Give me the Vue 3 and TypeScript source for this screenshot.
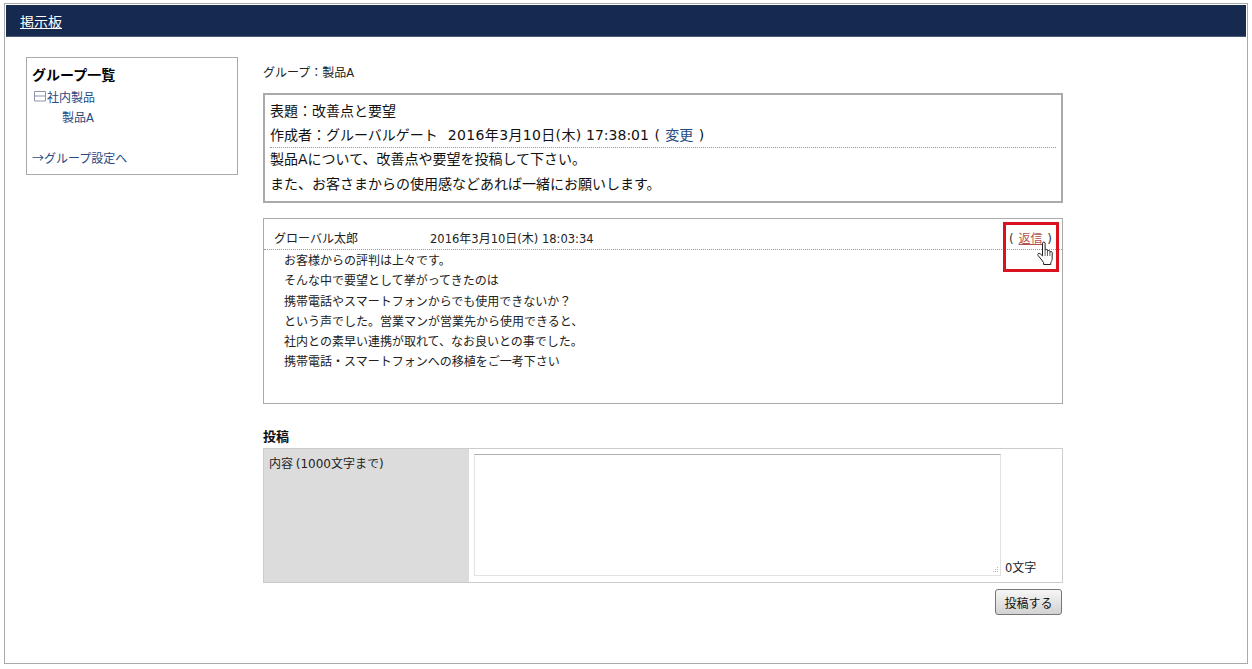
<script setup lang="ts">
const lines: string[] = [
  'お客様からの評判は上々です。',
  'そんな中で要望として挙がってきたのは',
  '携帯電話やスマートフォンからでも使用できないか？',
  'という声でした。営業マンが営業先から使用できると、',
  '社内との素早い連携が取れて、なお良いとの事でした。',
  '携帯電話・スマートフォンへの移植をご一考下さい',
]
</script>

<template>
  <div class="frame">
    <header class="bar"><a class="bar-title">掲示板</a></header>
    <div class="columns">
      <aside class="side">
        <h2 class="side-title">グループ一覧</h2>
        <div class="tree-row">
          <svg class="minus" width="14" height="12" viewBox="0 0 14 12">
            <path d="M1.500 1.500h11v9.500h-11zM1.500 6h11" fill="none" stroke="#8a96a8" stroke-width="1" />
          </svg>
          <a class="link">社内製品</a>
        </div>
        <div class="tree-child"><a class="link">製品<span class="lat">A</span></a></div>
        <a class="link settings">→グループ設定へ</a>
      </aside>
      <main class="main">
        <div class="group">グループ：製品<span class="lat">A</span></div>
        <section class="topic">
          <div class="topic-line">表題：改善点と要望</div>
          <div class="topic-line topic-author">作成者：グルーバルゲート&nbsp;&nbsp;<span class="topic-date">2016年3月10日(木)</span> 17:38:01 <span class="topic-paren">(</span> <a class="link">変更</a> <span class="topic-paren">)</span></div>
          <div class="topic-line topic-body-first">製品Aについて、改善点や要望を投稿して下さい。</div>
          <div class="topic-line">また、お客さまからの使用感などあれば一緒にお願いします。</div>
        </section>
        <section class="post">
          <div class="post-head">
            <span class="post-name">グローバル太郎</span>
            <span class="post-date"><span class="lat">2016</span>年<span class="lat">3</span>月<span class="lat">10</span>日<span class="lat">(</span>木<span class="lat">) 18:03:34</span></span>
            <span class="reply"><span class="reply-paren">( </span><a class="reply-link">返信</a><span class="reply-paren"> )</span></span>
            <div class="highlight"></div>
            <svg class="cursor" width="20" height="26" viewBox="0 0 20 26">
              <path d="M6.500 2.200c0-1.600 2.600-1.600 2.600 0v7.200c0-1.300 2.400-1.300 2.400 0v1c0-1.300 2.400-1.300 2.400 0v1c0-1.200 2.300-1.200 2.300.2v5.600c0 2-.7 3-1.400 4.300v2H7.600v-2C6 19 3.900 17 2.200 14.600c-1.200-1.800.7-3 2.100-1.800l2.200 2.100z" fill="#fff" stroke="#222" stroke-width="1" stroke-linejoin="round" />
              <path d="M9.100 10v5M11.500 10.400v4.600M13.900 11.400v3.600" fill="none" stroke="#444" stroke-width="0.800" />
            </svg>
          </div>
          <div class="post-body">
            <div v-for="line in lines" :key="line" class="post-line">{{ line }}</div>
          </div>
        </section>
        <h3 class="form-title">投稿</h3>
        <div class="form">
          <div class="form-label">内容 <span class="lat lat-wide">(1000</span>文字まで<span class="lat lat-wide">)</span></div>
          <div class="form-field">
            <div class="input-wrap">
              <textarea class="input"></textarea>
              <svg class="grip" width="8" height="8" viewBox="0 0 8 8">
                <path d="M6 1h1v1H6zM4 3h1v1H4zM6 3h1v1H6zM2 5h1v1H2zM4 5h1v1H4zM6 5h1v1H6z" fill="#b5b5b5" />
              </svg>
            </div>
            <span class="count"><span class="lat">0</span>文字</span>
          </div>
        </div>
        <div class="actions"><button class="submit" type="button">投稿する</button></div>
      </main>
    </div>
  </div>
</template>

<style>
html, body { margin: 0; background: #fff; }
</style>

<style scoped>
.frame {
  box-sizing: border-box;
  width: 1244px;
  height: 661px;
  margin: 3px 0 0 4px;
  border: 1px solid #aaa;
  padding: 1px;
  font-family: "Noto Sans CJK JP", "DejaVu Sans", sans-serif;
  font-size: 12px;
  color: #222;
  background: #fff;
}
.lat {
  font-family: "DejaVu Sans", sans-serif;
  font-size: 11.500px;
}
.lat-wide { font-size: 12px; }
.bar {
  box-sizing: border-box;
  height: 32px;
  padding: 7px 0 0 14px;
  background: #152a4e;
  border-bottom: 1px solid #4a5a78;
  line-height: 18px;
}
.bar-title {
  color: #fff;
  font-size: 14px;
  text-decoration: underline;
}
.columns {
  display: flex;
  align-items: flex-start;
  padding: 20px 0 0 20px;
}
.side {
  box-sizing: border-box;
  width: 212px;
  height: 118px;
  margin-right: 25px;
  border: 1px solid #aaa;
  padding: 7px 5px 0;
}
.side-title {
  margin: 0;
  font-size: 14px;
  line-height: 18px;
  font-weight: 700;
  color: #000;
}
.tree-row {
  display: flex;
  align-items: center;
  height: 20px;
  margin-top: 3px;
}
.minus { flex: none; margin-left: 1px; margin-top: -1px; }
.tree-child {
  height: 20px;
  margin-top: 1px;
  padding-left: 30px;
  line-height: 20px;
}
.link { color: #27497f; }
.settings {
  display: block;
  margin-top: 21px;
  line-height: 20px;
}
.main { width: 800px; }
.group {
  height: 36px;
  padding-top: 5px;
  box-sizing: border-box;
  line-height: 20px;
}
.topic {
  box-sizing: border-box;
  height: 110px;
  border: 2px solid #aaa;
  padding: 4px 5px 0;
  font-family: "DejaVu Sans", "Noto Sans CJK JP", sans-serif;
  font-size: 14px;
  color: #111;
}
.topic-line {
  line-height: 24px;
  height: 24px;
  white-space: nowrap;
}
.topic-author { border-bottom: 1px dotted #999; }
.topic-body-first { margin-top: -1px; margin-bottom: 1px; }
.topic-date { letter-spacing: 0.350px; margin-left: 1px; }
.topic-paren { padding: 0 1px; }
.post {
  box-sizing: border-box;
  height: 186px;
  margin-top: 15px;
  border: 1px solid #aaa;
}
.post-head {
  position: relative;
  display: flex;
  height: 21px;
  margin-top: 9px;
  padding-left: 10px;
  border-bottom: 1px dotted #999;
  line-height: 20px;
}
.post-name { width: 156px; }
.post-date { flex: 1; }
.reply {
  margin-right: 10px;
  font-size: 12px;
  color: #333;
}
.reply-paren {
  font-family: "DejaVu Sans", sans-serif;
  font-size: 12px;
  word-spacing: 1px;
}
.reply-link { color: #b5534d; text-decoration: underline; }
.highlight {
  position: absolute;
  left: 739px;
  top: -6px;
  width: 56px;
  height: 50px;
  border: 3px solid #d8121f;
  box-sizing: border-box;
}
.cursor {
  position: absolute;
  left: 772px;
  top: 13px;
}
.post-body { padding: 0 0 0 20px; }
.post-line { line-height: 20.300px; }
.form-title {
  margin: 23px 0 0;
  font-size: 13px;
  line-height: 18px;
  font-weight: 700;
  color: #111;
}
.form {
  box-sizing: border-box;
  display: flex;
  height: 135px;
  margin-top: 3px;
  border: 1px solid #ccc;
}
.form-label {
  width: 205px;
  flex: none;
  padding: 4px 0 0 5px;
  box-sizing: border-box;
  background: #dcdcdc;
  line-height: 20px;
}
.form-field {
  display: flex;
  align-items: flex-end;
  padding: 5px 0 0 5px;
}
.input-wrap { position: relative; }
.input {
  box-sizing: border-box;
  display: block;
  width: 527px;
  height: 122px;
  margin: 0 0 6px;
  border: 1px solid #e2e2e2;
  border-top-color: #b0b0b0;
  background: #fff;
  outline: none;
  resize: none;
}
.grip {
  position: absolute;
  right: 2px;
  bottom: 8px;
}
.count {
  margin: 0 0 6px 4px;
  line-height: 16px;
}
.actions {
  display: flex;
  justify-content: flex-end;
  margin-top: 6px;
  padding-right: 1px;
}
.submit {
  box-sizing: border-box;
  width: 67px;
  height: 26px;
  padding: 0;
  border: 1px solid #777;
  border-radius: 3px;
  background: linear-gradient(#f6f6f6, #d2d2d2);
  font-family: inherit;
  font-size: 12px;
  color: #111;
}
</style>
